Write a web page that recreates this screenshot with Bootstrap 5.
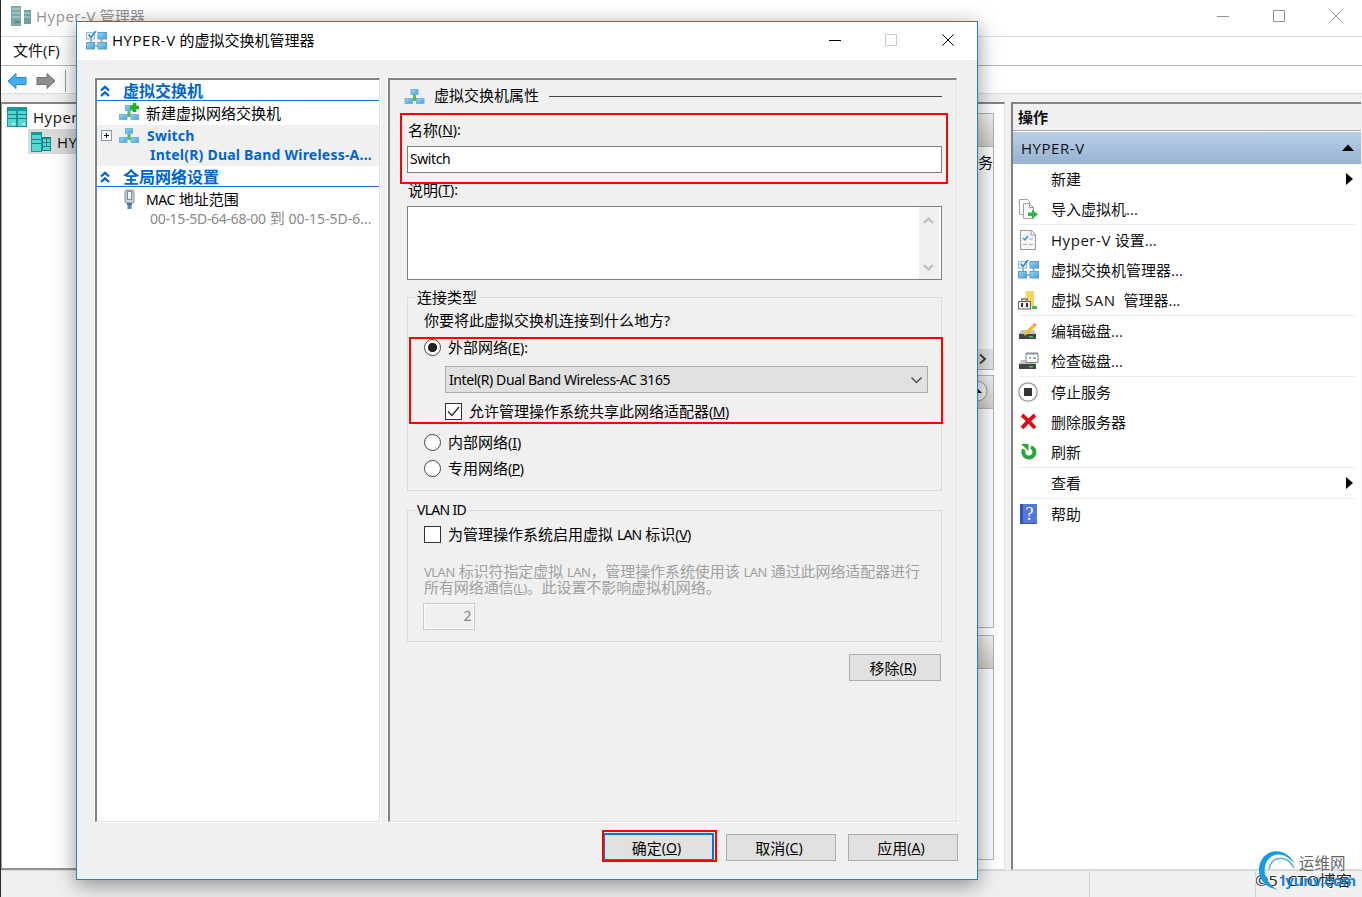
<!DOCTYPE html>
<html lang="zh-CN">
<head>
    <meta charset="UTF-8">
    <meta name="viewport" content="width=device-width, initial-scale=1">
    <title>Hyper-V 管理器</title>
    <link href="https://cdn.jsdelivr.net/npm/bootstrap@5.3.0/dist/css/bootstrap.min.css" rel="stylesheet">
    <script src="https://cdn.jsdelivr.net/npm/bootstrap@5.3.0/dist/js/bootstrap.bundle.min.js"></script>
    <style>
        body {
            width: 1362px;
            height: 897px;
            overflow: hidden;
            background: #f0f0f0;
            color: #111;
            font: 15px/20px "Open Sans", "Noto Sans CJK SC", sans-serif;
        }
        svg { display: block; flex: none; }
        u { text-underline-offset: 1px; text-decoration-thickness: 1px; }

        /* Main window */
        .main-window { width: 1362px; height: 897px; border-left: 1px solid #2b2b2e; }
        .main-title { height: 37px; background: #fff; border-bottom: 1px solid #e0e0e0; padding: 0 19px 4px 9px; color: #929292; }
        .main-menu { height: 29px; background: #fff; border-bottom: 1px solid #b4b4bc; padding: 0 0 2px 12px; }
        .main-tools { height: 28px; background: #fff; border-bottom: 1px solid #dcdcdc; padding: 2px 0 0 6px; gap: 9px; }
        .tool-sep { width: 1px; height: 22px; background: #999; }
        .panes { height: 776px; padding-top: 8px; gap: 6px; }
        .pane { background: #fff; border-top: 2px solid #848484; border-bottom: 1px solid #d8d8d8; }
        .tree-pane { width: 501px; border-left: 1px solid #9a9a9f; border-bottom: 2px solid #8e9498; }
        .tree-row { height: 25px; gap: 6px; padding-left: 5px; }
        .tree-row.picked { background: #d9d9d9; margin-left: 26px; padding-left: 3px; gap: 6px; }
        .center-pane { width: 497px; padding: 9px 10px 9px 0; border-right: 1px solid #e3e3e3; }
        .group-box { border: 1px solid #b2b2b2; background: #fbfbfb; }
        .group-head { height: 33px; background: linear-gradient(#f1f1f1, #cfccc6); border-bottom: 1px solid #b2b2b2; }
        .actions-pane { width: 350px; border-left: 2px solid #808080; }
        .actions-title { height: 27px; background: #f0f0f0; border-bottom: 1px solid #a9a9a9; padding-left: 5px; font-weight: 700; }
        .actions-group { height: 32px; margin-top: 1px; background: linear-gradient(#b9cfe8, #98b2d2); padding: 0 7px 1px 8px; }
        .seg { letter-spacing: .55px; }
        .action-row { height: 30px; padding: 0 8px 1px 4px; }
        .action-icon { width: 22px; margin-right: 12px; }
        .action-icon svg { margin: 0 auto; }
        .action-sep { height: 1px; margin: 0 6px; background: #ededed; }
        .status-bar { height: 27px; border-top: 1px solid #d9d9d9; }
        .status-cell { border-left: 1px solid #d4d4d4; }

        /* Dialog window */
        .vs-dialog { position: absolute; left: 76px; top: 21px; width: 902px; height: 859px; border: 1px solid #1883d7; background: #f0f0f0; box-shadow: 0 5px 20px rgba(0, 0, 0, .42); color: #000; }
        .vs-title { height: 38px; background: #fff; padding: 0 22px 2px 9px; }
        .vs-name { margin-left: 5px; }
        .vs-body { padding: 18px 20px 0 18px; gap: 8px; }
        .sunken { height: 744px; border: solid; border-width: 2px 1px 1px 2px; border-color: #808080 #e3e3e3 #e3e3e3 #808080; outline: 1px solid #fafafa; }
        .nav-side { width: 285px; background: #fff; }
        .side-head { height: 21px; border-bottom: 1px solid #1873d3; padding: 1px 0 0 3px; color: #0066cc; font-weight: 700; font-size: 16px; gap: 13px; }
        .side-row { height: 24px; padding-left: 22px; gap: 7px; }
        .side-sub { height: 18px; padding-left: 53px; line-height: 17px; white-space: nowrap; }
        .side-picked { height: 41px; background: #f0f0f0; color: #0066cc; font-weight: 700; }
        .lat { font-family: "Noto Sans", sans-serif; font-size: 14px; letter-spacing: -.43px; }
        .side-picked .lat { letter-spacing: .22px; }
        .mac-range { color: #8a8a8a; margin-top: -1px; }
        .mac-range .lat { letter-spacing: -.3px; }
        .mac-range .lat + .lat { letter-spacing: 0; }
        .props { width: 569px; padding: 0 14px 0 17px; }
        .rule { height: 1px; background: #444; margin-left: 10px; }
        .fake-input { border: 1px solid #7f7f7f; background: #fff; }
        .groupbox { border: 1px solid #dcdcdc; padding-left: 16px; }
        .legend-text { height: 20px; margin: -11px 0 0 -9px; padding: 0 3px 0 2px; background: #f0f0f0; width: max-content; }
        .opt { gap: 7px; }
        .key { letter-spacing: 0; }
        .radio-dot { width: 17px; height: 17px; border: 1px solid #444; border-radius: 50%; background: #fff; }
        .radio-dot.on { background: radial-gradient(circle, #222 0 4.2px, #fff 5px); }
        .check-sq { width: 17px; height: 17px; border: 1px solid #333; background: #fff; }
        .combo { width: 483px; height: 27px; margin: 5px 0 0 21px; border: 1px solid #adadad; background: #e1e1e1; padding: 0 4px 0 3px; }
        .vlan-note { margin-top: 16px; height: 32px; line-height: 16px; color: #a0a0a0; white-space: nowrap; letter-spacing: -.08px; }
        .vlan-note div { height: 16px; }
        .vlan-note .lat { font-size: 13px; line-height: 1; letter-spacing: -.5px; }
        .vlan-id { width: 52px; height: 27px; border: 1px solid #cacaca; margin: 8px 0 0 -1px; color: #808080; padding: 0 3px 1px 0; box-shadow: inset 0 0 0 1px #fbfbfb; }
        .win-btn { width: 110px; height: 27px; border: 1px solid #adadad; background: #e1e1e1; color: #000; display: flex; align-items: center; justify-content: center; padding: 0 4px 0 0; }
        .win-btn.main-btn { border: 2px solid #0078d7; width: 111px; height: 28px; padding: 1px 4px 0 0; }
        .footer-row { padding: 11px 19px 0 0; gap: 12px; }
        .frame-red { position: absolute; border: 2px solid #f00; }
        .site-mark { position: absolute; left: 1250px; top: 844px; }
    </style>
</head>
<body>
    <!-- Shared icons -->
    <svg width="0" height="0" class="position-absolute">
        <defs>
            <linearGradient id="blu" x1="0" y1="0" x2="1" y2="1"><stop offset="0" stop-color="#9ad6fb"/><stop offset="1" stop-color="#3d9fe6"/></linearGradient>
            <symbol id="net" viewBox="0 0 20 16">
                <path d="M8.500 5h3v4l3 3h-9l3-3z" fill="#55bb4c"/>
                <rect x="6.500" y=".5" width="7" height="5" fill="url(#blu)" stroke="#79b3dc"/>
                <rect x=".5" y="9.500" width="7.500" height="5" fill="url(#blu)" stroke="#79b3dc"/>
                <rect x="12" y="9.500" width="7.500" height="5" fill="url(#blu)" stroke="#79b3dc"/>
            </symbol>
            <symbol id="switchmgr" viewBox="0 0 21 19">
                <path d="M5 8v4M15.500 8v4M9 15h3" stroke="#999" stroke-width="1.500"/>
                <rect x=".5" y="1.500" width="8" height="6.500" fill="#eef5fb" stroke="#8ebbe0"/>
                <path d="M2.500 3.500l2.500 3 5-6.500" fill="none" stroke="#2f86d6" stroke-width="1.700"/>
                <rect x="12" y="1.500" width="8.500" height="6.500" fill="url(#blu)" stroke="#5f9fc9"/>
                <rect x=".5" y="11.500" width="8" height="6.500" fill="url(#blu)" stroke="#5f9fc9"/>
                <rect x="12" y="11.500" width="8.500" height="6.500" fill="url(#blu)" stroke="#5f9fc9"/>
            </symbol>
            <symbol id="chev" viewBox="0 0 10 12"><path d="M1 5.500l4-3.700 4 3.700M1 11l4-3.700 4 3.700" fill="none" stroke="#0066cc" stroke-width="2.300"/></symbol>
            <symbol id="disk" viewBox="0 0 20 18">
                <path d="M3 8h13l2 4H1z" fill="#c4c4c4"/><rect x="1" y="12" width="17" height="5" fill="#444"/><rect x="11" y="14" width="4" height="1.500" fill="#36d23c"/>
            </symbol>
        </defs>
    </svg>

    <div class="main-window d-flex flex-column">
        <div class="main-title d-flex align-items-center">
            <svg width="22" height="20" viewBox="0 0 22 20"><rect x="1" width="10" height="20" fill="#7ba7a9"/><path d="M2 3h8M2 7h8M2 11h8" stroke="#c4dede"/><path d="M5 16h5" stroke="#456f72"/><rect x="14" y="4" width="7" height="14" fill="#6fa1a3"/><path d="M14 7h6M14 11h6" stroke="#c4dede"/></svg>
            <span class="ms-1"><span class="seg">Hyper-V</span> 管理器</span>
            <svg class="ms-auto" width="126" height="13" viewBox="0 0 126 13" fill="none" stroke="#929292"><path d="M0 6.500h12M56.500.5h11v11h-11zM113.500.5l11 11M124.500.5l-11 11"/></svg>
        </div>
        <div class="main-menu d-flex align-items-center">文件(F)</div>
        <div class="main-tools d-flex align-items-center">
            <svg width="20" height="18" viewBox="0 0 20 18"><path d="M1 9l8-7.500v4h10v7H9v4z" fill="#45aef0" stroke="#2688cc"/></svg>
            <svg width="20" height="18" viewBox="0 0 20 18"><path d="M19 9l-8-7.500v4H1v7h10v4z" fill="#8e8e8e" stroke="#747474"/></svg>
            <div class="tool-sep"></div>
        </div>
        <div class="panes d-flex">
            <div class="pane tree-pane">
                <div class="tree-row d-flex align-items-center">
                    <svg width="20" height="20" viewBox="0 0 20 20"><rect width="20" height="20" fill="#159a9c"/><path d="M1 4h8v15H1zM11 4h8v15h-8z" fill="#57d5d3"/><path d="M1 7.500h18M1 11.500h18" stroke="#148486"/><path d="M5 17h3M15 17h3" stroke="#fff"/></svg>
                    <span><span class="seg">Hyper-V</span> 管理器</span>
                </div>
                <div class="tree-row picked d-flex align-items-center">
                    <svg width="20" height="20" viewBox="0 0 20 20"><rect width="11" height="20" fill="#159a9c"/><rect x="1" y="3" width="9" height="16" fill="#57d5d3"/><path d="M1 7.500h9M1 11.500h9" stroke="#148486"/><rect x="11" y="5" width="9" height="14" fill="#128689"/><path d="M12 7h3v3h-3zM16 7h3v3h-3zM12 11h3v3h-3zM16 11h3v3h-3zM12 15h7v3h-7z" fill="#57d5d3"/></svg>
                    <span class="seg">HYPER-V</span>
                </div>
            </div>
            <div class="pane center-pane d-flex flex-column">
                <div class="group-box d-flex flex-column" style="height:257px">
                    <div class="group-head"></div>
                    <div class="text-end lh-1 pt-2">任务</div>
                    <div class="d-flex justify-content-end mt-auto"><div style="width:24px;height:20px;background:#e3e3e3"><svg class="ms-auto" width="18" height="20" viewBox="0 0 18 20"><path d="M5 5.500l5 4.500-5 4.500" fill="none" stroke="#444" stroke-width="2"/></svg></div></div>
                </div>
                <div class="group-box" style="height:253px;margin-top:5px">
                    <div class="group-head"><svg class="ms-auto" width="31" height="32" viewBox="0 0 31 32"><circle cx="15" cy="15" r="10" fill="#f3f3f3" stroke="#999"/><path d="M12 17l4-4 4 4z"/></svg></div>
                </div>
                <div class="group-box flex-grow-1" style="margin-top:7px"><div class="group-head"></div></div>
            </div>
            <div class="pane actions-pane">
                <div class="actions-title d-flex align-items-center">操作</div>
                <div class="actions-group d-flex align-items-center justify-content-between"><span class="seg">HYPER-V</span><svg width="12" height="7" viewBox="0 0 12 7"><path d="M0 7l6-6.500L12 7z"/></svg></div>
                <div class="action-row d-flex align-items-center"><div class="action-icon"></div>新建<svg class="ms-auto" width="7" height="12" viewBox="0 0 7 12"><path d="M0 0l7 6-7 6z"/></svg></div>
                <div class="action-row d-flex align-items-center">
                    <div class="action-icon"><svg width="20" height="20" viewBox="0 0 20 20"><path d="M1.500.5h8l2 2v13h-10z" fill="#fff" stroke="#a2a2a2"/><path d="M5.500 4.500h6l4 4v11h-10z" fill="#f7f7f7" stroke="#a2a2a2"/><path d="M11.500 4.500v4h4" fill="none" stroke="#999"/><path d="M10 13.500h4v-3l6 5-6 4.500v-3h-4z" fill="#2db93a"/></svg></div>导入虚拟机...
                </div>
                <div class="action-sep"></div>
                <div class="action-row d-flex align-items-center">
                    <div class="action-icon"><svg width="16" height="20" viewBox="0 0 16 20"><path d="M.5.500h11l4 4v15H.5z" fill="#f5f7f8" stroke="#999"/><path d="M11 1v4h4" fill="none" stroke="#999"/><path d="M3 8l2 2 3-4" fill="none" stroke="#2f92dc" stroke-width="1.400"/><path d="M9 9h4M9 14.500h4M3 14.500h4" stroke="#aaa"/></svg></div><span><span class="seg">Hyper-V</span> 设置...</span>
                </div>
                <div class="action-row d-flex align-items-center"><div class="action-icon"><svg width="21" height="19"><use href="#switchmgr"/></svg></div>虚拟交换机管理器...</div>
                <div class="action-row d-flex align-items-center">
                    <div class="action-icon"><svg width="20" height="20" viewBox="0 0 20 20"><path d="M7 1h9v15H7z" fill="#f5d35c"/><path d="M7 1h2v15H7z" fill="#fae794"/><rect x=".5" y="11.500" width="12" height="7.500" fill="#f2f2f2" stroke="#666"/><path d="M4 11V9h5v2" fill="none" stroke="#777" stroke-width="1.500"/><path d="M4 13v4M9 13v4" stroke="#333" stroke-width="2"/><path d="M14 17.500h5" stroke="#42be45" stroke-width="3"/></svg></div><span>虚拟 <span class="seg">SAN</span> <span class="ms-1">管理器...</span></span>
                </div>
                <div class="action-sep"></div>
                <div class="action-row d-flex align-items-center"><div class="action-icon"><svg width="20" height="18" viewBox="0 0 20 18"><use href="#disk"/><path d="M6 14l2-5 7-7 3 2-8 8z" fill="#f0bd37"/><path d="M15 2l1-1 3 2-1 1z" fill="#e07c83"/></svg></div>编辑磁盘...</div>
                <div class="action-row d-flex align-items-center"><div class="action-icon"><svg width="21" height="18" viewBox="0 0 21 18"><use href="#disk" width="20" height="18"/><path d="M8 1.500h12v9H8z" fill="#fff" stroke="#7b8288"/><path d="M8 1.500h12" stroke="#8b9299" stroke-width="2"/><path d="M11 6h2m2 0h3" stroke="#555"/></svg></div>检查磁盘...</div>
                <div class="action-sep"></div>
                <div class="action-row d-flex align-items-center"><div class="action-icon"><svg width="20" height="20" viewBox="0 0 20 20"><circle cx="10" cy="10" r="9.200" fill="#fff" stroke="#999" stroke-width="1.300"/><rect x="6" y="6" width="8" height="8" fill="#333"/></svg></div>停止服务</div>
                <div class="action-row d-flex align-items-center"><div class="action-icon"><svg width="17" height="17" viewBox="0 0 17 17"><path d="M2 2q6 5 13 13M15 2Q8 8 2 15" fill="none" stroke="#e1071a" stroke-width="3.800"/></svg></div>删除服务器</div>
                <div class="action-row d-flex align-items-center"><div class="action-icon"><svg width="17" height="17" viewBox="0 0 17 17"><path d="M4 6.500A5.500 5.500 0 1 0 11 4" fill="none" stroke="#28a936" stroke-width="4"/><path d="M1 1h7.500v7z" fill="#28a936"/></svg></div>刷新</div>
                <div class="action-sep"></div>
                <div class="action-row d-flex align-items-center pb-0"><div class="action-icon"></div>查看<svg class="ms-auto" width="7" height="12" viewBox="0 0 7 12"><path d="M0 0l7 6-7 6z"/></svg></div>
                <div class="action-sep"></div>
                <div class="action-row d-flex align-items-center pb-0">
                    <div class="action-icon"><svg width="17" height="20" viewBox="0 0 17 20"><rect width="17" height="20" fill="#2f55bb"/><rect x="3" width="14" height="19" fill="#5579d6"/><text x="9.500" y="16" text-anchor="middle" font-size="18" font-family="Liberation Serif" fill="#fff">?</text></svg></div>帮助
                </div>
            </div>
        </div>
        <div class="status-bar d-flex justify-content-end">
            <div class="status-cell" style="width:166px"></div>
            <div class="status-cell" style="width:107px"></div>
        </div>
    </div>

    <div class="vs-dialog">
        <div class="vs-title d-flex align-items-center">
            <svg width="21" height="19"><use href="#switchmgr"/></svg>
            <span class="vs-name"><span class="seg">HYPER-V</span> 的虚拟交换机管理器</span>
            <svg class="ms-auto" width="126" height="13" viewBox="0 0 126 13" fill="none" stroke="#000"><path d="M0 6.500h12M113.500.5l11 11M124.500.5l-11 11"/><path d="M56.500.5h11v11h-11z" stroke="#ccc"/></svg>
        </div>
        <div class="vs-body d-flex">
            <div class="sunken nav-side">
                <div class="side-head d-flex align-items-center"><svg width="10" height="12"><use href="#chev"/></svg><span>虚拟交换机</span></div>
                <div class="side-row d-flex align-items-center">
                    <svg width="20" height="20" viewBox="0 0 20 20"><use href="#net" y="2" width="20" height="16"/><path d="M15.500 0v9M11 4.500h9" stroke="#18b418" stroke-width="3.500"/></svg>
                    <span>新建虚拟网络交换机</span>
                </div>
                <div class="side-picked">
                    <div class="d-flex align-items-center ps-1" style="height:21px">
                        <svg width="11" height="11" viewBox="0 0 11 11"><rect x=".5" y=".5" width="10" height="10" fill="#fff" stroke="#8b97a5"/><path d="M3 5.500h5M5.500 3v5" stroke="#000"/></svg>
                        <svg style="margin-left:7px" width="20" height="16"><use href="#net"/></svg>
                        <span class="lat ms-2 lh-1">Switch</span>
                    </div>
                    <div class="side-sub lat">Intel(R) Dual Band Wireless-A...</div>
                </div>
                <div class="side-head d-flex align-items-center"><svg width="10" height="12"><use href="#chev"/></svg><span>全局网络设置</span></div>
                <div class="side-row d-flex align-items-center" style="padding-left:23px">
                    <svg width="19" height="20" viewBox="0 0 19 20"><rect x="5" y="1" width="9" height="13" rx="1.500" fill="#c3cedb" stroke="#8390a0"/><rect x="7.500" y="2.500" width="4" height="8" fill="#f3f6f9" stroke="#7b8794"/><path d="M7 14h5v2H7z" fill="#667"/><path d="M9.500 16v4" stroke="#3d97c6" stroke-width="4"/></svg>
                    <span><span class="lat">MAC</span> 地址范围</span>
                </div>
                <div class="side-sub mac-range"><span class="lat">00-15-5D-64-68-00</span> 到 <span class="lat">00-15-5D-6...</span></div>
            </div>
            <div class="sunken props">
                <div class="d-flex align-items-center" style="height:33px;margin-left:-3px">
                    <svg width="21" height="16"><use href="#net"/></svg><span class="pb-1" style="margin-left:9px">虚拟交换机属性</span><div class="rule flex-grow-1"></div>
                </div>
                <div class="d-flex align-items-center" style="height:33px;padding-left:1px">名称<span class="lat key">(<u>N</u>):</span></div>
                <div class="fake-input lat d-flex align-items-center" style="height:27px;padding:0 0 2px 2px">Switch</div>
                <div class="d-flex align-items-center" style="height:33px;padding-left:1px">说明<span class="lat key">(<u>T</u>):</span></div>
                <div class="fake-input d-flex justify-content-end" style="height:74px"><svg width="22" height="72" viewBox="0 0 22 72"><path d="M0 0h20v72H0z" fill="#f0f0f0"/><path d="M5 16l4.500-4.500L14 16M5 58l4.500 4.500L14 58" fill="none" stroke="#bdbdbd" stroke-width="2"/></svg></div>
                <div class="groupbox" style="height:194px;margin-top:17px">
                    <div class="legend-text">连接类型</div>
                    <div style="height:26px;padding-top:3px">你要将此虚拟交换机连接到什么地方<span class="lat">?</span></div>
                    <div class="opt d-flex align-items-center" style="height:28px"><div class="radio-dot on"></div><span>外部网络<span class="lat key">(<u>E</u>):</span></span></div>
                    <div class="combo d-flex align-items-center justify-content-between"><span class="lat" style="letter-spacing:-.4px">Intel(R) Dual Band Wireless-AC 3165</span><svg width="13" height="8" viewBox="0 0 13 8"><path d="M1.500 1.500l5 5 5-5" fill="none" stroke="#555" stroke-width="1.500"/></svg></div>
                    <div class="opt d-flex align-items-center" style="height:36px;margin-left:21px">
                        <div class="check-sq"><svg width="15" height="15" viewBox="0 0 15 15"><path d="M2 7.500l4 4 7-8.500" fill="none" stroke="#333" stroke-width="1.500"/></svg></div>
                        <span>允许管理操作系统共享此网络适配器<span class="lat">(<u>M</u>)</span></span>
                    </div>
                    <div class="opt d-flex align-items-center" style="height:26px"><div class="radio-dot"></div><span>内部网络<span class="lat key">(<u>I</u>)</span></span></div>
                    <div class="opt d-flex align-items-center" style="height:26px"><div class="radio-dot"></div><span>专用网络<span class="lat">(<u>P</u>)</span></span></div>
                </div>
                <div class="groupbox" style="height:132px;margin-top:19px">
                    <div class="legend-text lat" style="letter-spacing:-.7px">VLAN ID</div>
                    <div class="opt d-flex align-items-center" style="height:26px;margin-top:1px"><div class="check-sq"></div><span>为管理操作系统启用虚拟 <span class="lat" style="letter-spacing:-.8px">LAN</span> 标识<span class="lat">(<u>V</u>)</span></span></div>
                    <div class="vlan-note">
                        <div><span class="lat">VLAN</span> 标识符指定虚拟 <span class="lat">LAN</span>，管理操作系统使用该 <span class="lat">LAN</span> 通过此网络适配器进行</div>
                        <div>所有网络通信<span class="lat">(<u>L</u>)</span>。此设置不影响虚拟机网络。</div>
                    </div>
                    <div class="vlan-id lat d-flex align-items-center justify-content-end">2</div>
                </div>
                <div class="win-btn ms-auto" style="width:92px;margin:12px 1px 0 0">移除<span class="lat key">(<u>R</u>)</span></div>
            </div>
        </div>
        <div class="footer-row d-flex justify-content-end">
            <div class="win-btn main-btn">确定<span class="lat key">(<u>O</u>)</span></div>
            <div class="win-btn" style="margin-top:1px">取消<span class="lat key">(<u>C</u>)</span></div>
            <div class="win-btn" style="margin-top:1px">应用<span class="lat key">(<u>A</u>)</span></div>
        </div>
        <!-- Highlight frames over the form -->
        <div class="frame-red" style="left:323px;top:91px;width:548px;height:71px"></div>
        <div class="frame-red" style="left:332px;top:315px;width:534px;height:87px"></div>
        <div class="frame-red" style="left:525px;top:808px;width:115px;height:32px"></div>
    </div>

    <svg class="site-mark" width="112" height="53" viewBox="0 0 112 53">
        <text x="5" y="42" font-size="15" textLength="97" lengthAdjust="spacingAndGlyphs" fill="#222" stroke="#fff" stroke-width="2" paint-order="stroke" font-family="Open Sans, Noto Sans CJK SC">©51CTO博客</text>
        <path d="M45 20C37 4 18 3 11 17c-6 13 1 26 17 29C17 40 12 29 16 19 22 7 35 8 45 20z" fill="#149be6"/>
        <path d="M44 24C37 11 22 11 19 25" fill="none" stroke="#4aa9e0" stroke-width="1.500"/>
        <text x="49" y="25" font-size="15.500" fill="#666" font-family="Noto Sans CJK SC">运维网</text>
        <text x="31" y="42" font-size="15" font-weight="700" textLength="75" lengthAdjust="spacingAndGlyphs" fill="#1583d6" font-family="Liberation Sans">lyunv.com</text>
    </svg>
</body>
</html>
